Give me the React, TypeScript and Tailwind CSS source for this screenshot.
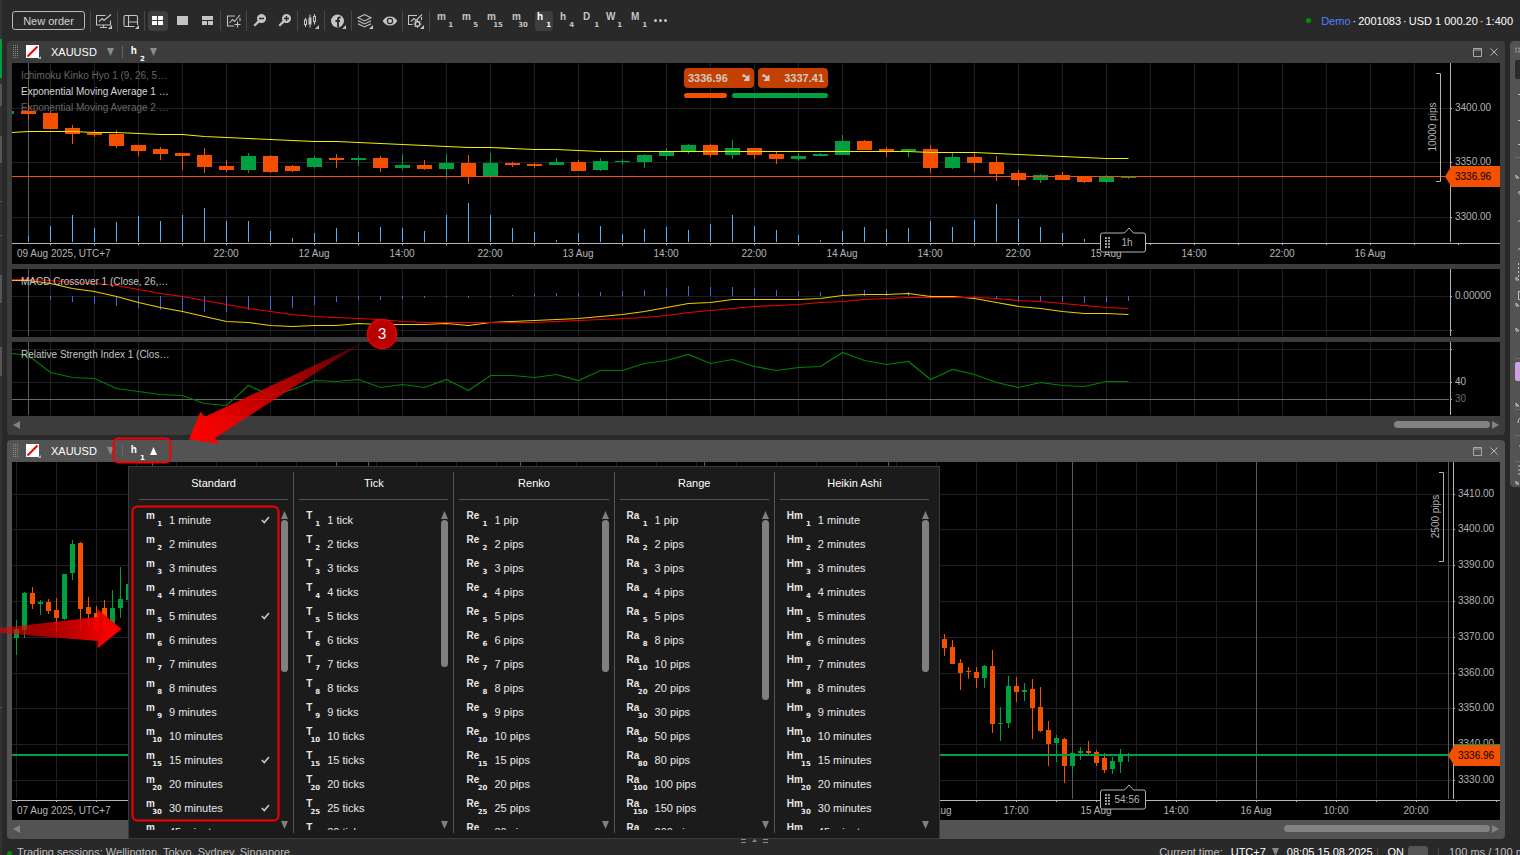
import React from 'react';

type Candle = [up: 0 | 1, top: number, bottom: number, high: number, low: number];

const UP = '#009f3f';
const DOWN = '#f55000';
const GRID = '#1e1e24';
const MARK = '#5c5c5c';
const AXIS = '#b4b4b4';

const H2_CANDLES: Candle[] = [
  [0, 111, 114, 103, 120], [0, 113, 129, 111, 129], [0, 128, 134, 125, 144], [0, 133, 135, 130, 137],
  [0, 134, 146, 130, 148], [0, 145, 151, 145, 156], [0, 149, 154, 147, 160], [0, 153, 156, 153, 170],
  [0, 155, 167, 148, 173], [0, 166, 170, 160, 172], [1, 156, 170, 153, 173], [0, 156, 172, 155, 173],
  [0, 166, 171, 165, 172], [1, 158, 167, 156, 168], [0, 158, 160, 154, 168], [1, 158, 160, 156, 166],
  [0, 158, 168, 156, 172], [1, 165, 168, 154, 170], [0, 165, 169, 160, 170], [1, 163, 169, 154, 179],
  [0, 163, 177, 155, 184], [1, 163, 176, 153, 178], [0, 163, 165, 162, 167], [0, 164, 166, 163, 168],
  [1, 162, 165, 158, 165], [0, 162, 171, 160, 171], [1, 161, 170, 158, 171], [1, 161, 162, 159, 165],
  [1, 155, 162, 154, 168], [1, 151, 156, 148, 160], [1, 145, 151, 144, 154], [0, 145, 155, 144, 157],
  [1, 148, 155, 140, 159], [0, 148, 155, 148, 159], [0, 154, 159, 151, 164], [1, 156, 159, 153, 161],
  [1, 154, 156, 153, 156], [1, 141, 155, 135, 155], [0, 141, 150, 140, 150], [0, 149, 151, 147, 157],
  [1, 149, 151, 149, 157], [0, 149, 168, 145, 173], [1, 157, 168, 152, 169], [0, 157, 163, 152, 172],
  [0, 162, 174, 156, 181], [0, 173, 180, 170, 186], [1, 175, 180, 174, 183], [0, 175, 180, 172, 180],
  [0, 176, 182, 176, 183], [1, 176, 182, 175, 183], [1, 177, 178, 177, 179],
];

const VOLUMES = [
  236, 226, 215, 228, 222, 216, 221, 215, 208, 221, 221, 231, 238, 233, 228, 232, 227, 228, 231, 215, 203, 215, 228, 232, 240,
  233, 226, 234, 229, 227, 230, 224, 215, 226, 230, 235, 240, 231, 227, 229, 228, 221, 227, 220, 204, 219, 227, 233, 239,
];

const EMA = [
  131, 131, 131, 132, 132, 133, 134, 134, 136, 137, 138, 139, 140, 141, 141, 142, 143, 144, 145, 146, 147, 147, 148, 149, 149,
  150, 151, 151, 151, 151, 151, 151, 151, 151, 151, 151, 151, 151, 151, 151, 151, 152, 152, 152, 153, 154, 155, 156, 157, 158, 158,
];

const MACD_BARS = [
  297, 300, 302, 304, 306, 308, 310, 311, 312, 312, 310, 310, 308, 305, 302, 300, 300, 299, 298, 297, 298, 297, 295, 294, 293,
  293, 292, 291, 290, 288, 286, 287, 287, 288, 290, 291, 292, 290, 290, 291, 292, 295, 297, 297, 299, 302, 302, 302, 303, 302, 301,
];

const MACD_SIGNAL = [
  279, 280, 282, 283, 285, 289, 293, 296, 300, 304, 308, 311, 314, 316, 317, 318, 319, 321, 322, 322, 322, 322, 322, 322, 321,
  320, 319, 318, 317, 315, 312, 310, 308, 306, 305, 304, 302, 301, 299, 298, 297, 297, 297, 297, 298, 300, 301, 303, 305, 307, 308,
];

const MACD_LINE = [
  280, 283, 288, 291, 296, 302, 307, 311, 316, 321, 322, 325, 326, 325, 325, 323, 324, 324, 324, 323, 325, 322, 321, 320, 319,
  318, 316, 314, 311, 307, 303, 302, 299, 299, 299, 299, 298, 295, 294, 294, 293, 296, 296, 298, 302, 306, 308, 311, 313, 313, 314,
];

const RSI = [
  355, 372, 377, 378, 388, 391, 394, 395, 403, 405, 385, 395, 389, 380, 381, 379, 387, 384, 387, 379, 390, 375, 375, 377, 374,
  380, 370, 370, 363, 360, 354, 363, 359, 366, 370, 367, 366, 352, 360, 364, 361, 379, 369, 374, 382, 387, 382, 385, 386, 381, 381,
];

const H1_LEFT: Candle[] = [
  [1, 629, 638, 620, 655], [1, 593, 630, 592, 638], [0, 593, 604, 587, 609], [1, 602, 604, 600, 615],
  [0, 602, 611, 599, 614], [0, 610, 618, 598, 632], [1, 574, 619, 574, 620], [1, 544, 573, 540, 580],
  [0, 543, 609, 542, 630], [0, 607, 614, 597, 626], [0, 613, 630, 606, 632], [0, 608, 628, 600, 632],
  [1, 608, 628, 590, 632], [1, 599, 608, 567, 618], [1, 584, 600, 552, 602], [1, 574, 586, 560, 590],
];

const H1_RIGHT: Candle[] = [
  [0, 639, 648, 634, 656], [0, 647, 664, 640, 664], [0, 663, 673, 659, 690], [0, 671, 672, 667, 679],
  [0, 672, 678, 667, 688], [1, 666, 678, 665, 688], [0, 666, 724, 650, 733], [1, 723, 724, 707, 741],
  [1, 686, 723, 676, 728], [0, 686, 692, 677, 702], [1, 690, 692, 683, 701], [0, 689, 708, 679, 739],
  [0, 707, 731, 687, 732], [0, 730, 744, 721, 766], [1, 738, 743, 735, 762], [0, 739, 766, 738, 783],
  [1, 753, 766, 752, 775], [1, 751, 753, 747, 760], [0, 751, 753, 741, 754], [0, 752, 763, 750, 766],
  [0, 758, 770, 753, 773], [1, 761, 769, 757, 774], [1, 754, 762, 749, 773], [1, 755, 756, 753, 762],
];

const MINUTES = [1, 2, 3, 4, 5, 6, 7, 8, 9, 10, 15, 20, 30, 45];
const TICKS = [1, 2, 3, 4, 5, 6, 7, 8, 9, 10, 15, 20, 25, 30];
const RANGES = [1, 2, 3, 4, 5, 8, 10, 20, 30, 50, 80, 100, 150, 200];

const PERIOD_GROUPS = [
  { title: 'Standard', code: 'm', unit: 'minute', values: MINUTES, checked: [1, 5, 15, 30], glyph: 'w-4', thumb: 'h-[152px]' },
  { title: 'Tick', code: 'T', unit: 'tick', values: TICKS, checked: [], glyph: 'w-[14px]', thumb: 'h-[147px]' },
  { title: 'Renko', code: 'Re', unit: 'pip', values: TICKS, checked: [], glyph: 'w-[21px]', thumb: 'h-[152px]' },
  { title: 'Range', code: 'Ra', unit: 'pip', values: RANGES, checked: [], glyph: 'w-[21px]', thumb: 'h-[180px]' },
  { title: 'Heikin Ashi', code: 'Hm', unit: 'minute', values: MINUTES, checked: [], glyph: 'w-[24px]', thumb: 'h-[152px]' },
];

const Triangle: React.FC<{ dir: 'up' | 'down' | 'left' | 'right'; className?: string }> = ({ dir, className = '' }) => {
  const d = { up: 'M4 0L8 8H0z', down: 'M0 0H8L4 8z', left: 'M0 4L8 0V8z', right: 'M8 4L0 0V8z' }[dir];
  return (
    <svg width="7" height="8" viewBox="0 0 8 8" preserveAspectRatio="none" fill="currentColor" className={`shrink-0 ${className}`}>
      <path d={d} />
    </svg>
  );
};

const PeriodGlyph: React.FC<{ code: string; n: number; className?: string }> = ({ code, n, className = '' }) => (
  <span className={`flex h-4 flex-col text-[10px] leading-[8px] font-bold ${className}`}>
    <span className="self-start">{code}</span>
    <span className="self-end font-['DejaVu_Sans',sans-serif] text-[7px]">{n}</span>
  </span>
);

/* ---------- toolbar ---------- */

const Corner = () => <path d="M16 12v4h-4z" fill="currentColor" stroke="none" />;

const Icon: React.FC<{ children: React.ReactNode }> = ({ children }) => (
  <svg width="16" height="16" viewBox="0 0 16 16" fill="none" stroke="currentColor" strokeWidth="1.1">
    {children}
  </svg>
);

const Sep = () => <span className="h-5 w-px shrink-0 bg-[#484848]" />;

interface ToolProps {
  label: string;
  active?: boolean;
  wide?: boolean;
  children: React.ReactNode;
}

const Tool: React.FC<ToolProps> = ({ label, active, wide, children }) => (
  <button aria-label={label} className={`flex shrink-0 items-center justify-center ${wide ? 'w-[26px]' : 'w-[25px]'}`}>
    <span className={`flex h-[20px] w-[20px] items-center justify-center rounded ${active ? 'bg-[#3e3e3e] text-white' : ''}`}>
      {children}
    </span>
  </button>
);

const PERIOD_BUTTONS = [
  { code: 'm', n: 1, width: 'w-[25px]' },
  { code: 'm', n: 5, width: 'w-[25px]' },
  { code: 'm', n: 15, width: 'w-[25px]' },
  { code: 'm', n: 30, width: 'w-[25px]' },
  { code: 'h', n: 1, width: 'w-[23px]', active: true },
  { code: 'h', n: 4, width: 'w-[23px]' },
  { code: 'D', n: 1, width: 'w-[23px]' },
  { code: 'W', n: 1, width: 'w-[25px]' },
  { code: 'M', n: 1, width: 'w-[25px]' },
];

const Toolbar = () => (
  <header className="flex h-[41px] shrink-0 items-center pr-[7px] pl-3 text-[#c4c4c4]">
    <button className="mr-[5px] h-[19px] w-[73px] rounded-[3px] border border-[#b8b8b8] leading-4 text-[#d4d4d4]">New order</button>
    <Sep />
    <Tool label="Chart window" wide>
      <Icon>
        <path d="M9.500 2.500H.5v9.500H14.500V7.500M7.500 12v2.500M4 14.500h7M3 8.500l3-3 2 2 7-6" />
        <Corner />
      </Icon>
    </Tool>
    <Sep />
    <Tool label="Panels" wide>
      <Icon>
        <path d="M11.500 13.500H2.500q-1.500 0-1.500-1.500V4q0-1.500 1.500-1.500h10.500q1.500 0 1.500 1.500v8M5.500 2.500v11M5.500 9h9" />
        <Corner />
      </Icon>
    </Tool>
    <Sep />
    <Tool label="Multi chart" active>
      <svg width="11" height="9" fill="currentColor"><path d="M0 0h5v4H0zM6 0h5v4H6zM0 5h5v4H0zM6 5h5v4H6z" /></svg>
    </Tool>
    <Tool label="Single chart">
      <svg width="11" height="9" fill="currentColor"><path d="M0 0h11v9H0z" /></svg>
    </Tool>
    <Tool label="Free chart">
      <svg width="11" height="9" fill="currentColor"><path d="M0 0h11v4H0zM0 5h5v4H0zM6 5h5v4H6z" /></svg>
    </Tool>
    <Sep />
    <Tool label="New chart">
      <Icon>
        <path d="M9 3H1.500v10H8M3.500 10l3-3.500 2 2L14 2M11.500 8.500v6M8.500 11.500h6M14 5V8" />
      </Icon>
    </Tool>
    <Sep />
    <Tool label="Zoom out">
      <svg width="13" height="13" fill="currentColor"><path fillRule="evenodd" d="M8.500 0a4.500 4.500 0 1 1-2.200 8.400L2 12.600.5 11 4.600 6.700A4.500 4.500 0 0 1 8.500 0zM6 3.800v1.400h5V3.800z" /></svg>
    </Tool>
    <Tool label="Zoom in">
      <svg width="13" height="13" fill="currentColor"><path fillRule="evenodd" d="M8.500 0a4.500 4.500 0 1 1-2.200 8.400L2 12.600.5 11 4.600 6.700A4.500 4.500 0 0 1 8.500 0zM7.800 2v1.800H6v1.400h1.800V7h1.400V5.200H11V3.800H9.200V2z" /></svg>
    </Tool>
    <Sep />
    <Tool label="Chart type" wide>
      <Icon>
        <path d="M2.500 5v2M1.500 7h2v4.500h-2zM2.500 11.500v2.500M11.500 1v2.500M10.500 3.500h2v5h-2zM11.500 8.500v3" />
        <path d="M6.500 1.500h1v13h-1zM5.500 4.500h3v7h-3z" fill="currentColor" stroke="none" />
        <Corner />
      </Icon>
    </Tool>
    <Sep />
    <Tool label="Indicators" wide>
      <Icon>
        <circle cx="7.500" cy="8" r="6.500" fill="currentColor" stroke="none" />
        <path d="M10.500 4.500H9.500Q8 4.500 8 6v8M5.500 8h4.500" stroke="#292929" strokeWidth="1.800" />
        <Corner />
      </Icon>
    </Tool>
    <Sep />
    <Tool label="Objects">
      <Icon>
        <path d="M7.500 1.500l6.500 3.200-6.500 3.200L1 4.700z" />
        <path d="M1 7.700l6.500 3.200L14 7.700M1 10.700l6.500 3.300L14 10.700" />
        <Corner />
      </Icon>
    </Tool>
    <Tool label="View options">
      <Icon>
        <path fillRule="evenodd" d="M8 3.500c3.300 0 6 2 7.300 4.500-1.300 2.500-4 4.500-7.300 4.500S2 10.500.7 8C2 5.500 4.700 3.500 8 3.500zm0 1.300a3.200 3.200 0 1 0 0 6.400 3.200 3.200 0 0 0 0-6.400z" fill="currentColor" stroke="none" />
        <circle cx="8" cy="8" r="2" fill="currentColor" stroke="none" />
      </Icon>
    </Tool>
    <Sep />
    <Tool label="Chart settings" wide>
      <Icon>
        <path d="M9 2.500H.5v9h4M3 8.500l3-3 2 2 6-6M13.500 4v3" />
        <circle cx="9.500" cy="11" r="2.300" strokeWidth="1.400" />
        <path d="M9.500 7v1.500M9.500 13.500V15M5.500 11h1.500M12 11h1.500M6.700 8.200l1 1M12.300 8.200l-1 1M6.700 13.800l1-1" />
        <Corner />
      </Icon>
    </Tool>
    <Sep />
    <div className="ml-[5px] flex items-center">
      {PERIOD_BUTTONS.map((p) => (
        <button key={p.code + p.n} className={`${p.width} flex h-5 items-center`}>
          <span className={`flex h-5 items-center rounded px-0.5 ${p.active ? 'bg-[#3e3e3e] text-white' : ''}`}>
            <PeriodGlyph code={p.code} n={p.n} className={p.code === 'h' ? 'w-[14px]' : 'w-4'} />
          </span>
        </button>
      ))}
    </div>
    <button aria-label="More periods" className="flex gap-0.5">
      <i className="h-[3px] w-[3px] rounded-full bg-current" />
      <i className="h-[3px] w-[3px] rounded-full bg-current" />
      <i className="h-[3px] w-[3px] rounded-full bg-current" />
    </button>
    <div className="ml-auto flex items-center gap-0.5 whitespace-nowrap text-white">
      <i className="mr-2 h-[5px] w-[5px] rounded-full bg-[#009000]" />
      <a href="#account" className="text-[#5080ff]">Demo</a>
      <span>·</span>
      <span>2001083</span>
      <span>·</span>
      <span>USD 1 000.20</span>
      <span>·</span>
      <span>1:400</span>
    </div>
  </header>
);

/* ---------- chart parts ---------- */

const Candles: React.FC<{ data: Candle[]; x0: number; step: number; body: number }> = ({ data, x0, step, body }) => (
  <g shapeRendering="crispEdges">
    {data.map(([up, top, bottom, high, low], i) => {
      const x = x0 + i * step;
      return (
        <g key={x} fill={up ? UP : DOWN}>
          <rect x={x} y={high} width="1" height={low - high} />
          <rect x={x - (body - 1) / 2} y={top} width={body} height={bottom - top} />
        </g>
      );
    })}
  </g>
);

const Line: React.FC<{ values: number[]; start: number; color: string }> = ({ values, start, color }) => (
  <polyline
    fill="none"
    stroke={color}
    strokeWidth="1.2"
    points={`12,${start + 0.5} ` + values.map((y, i) => `${28.5 + i * 22},${y + 0.5}`).join(' ')}
  />
);

interface PlotProps {
  top: number;
  height: number;
  floor?: number;
  axisX: number;
  columns: [first: number, step: number];
  rows: number[];
  marks: number[];
  prices: [y: number, label: string, dim?: boolean][];
  children: React.ReactNode;
  overlay?: React.ReactNode;
}

// Time runs from the left edge; the price scale hangs on the right edge.
const Plot: React.FC<PlotProps> = ({ top, height, floor, axisX, columns, rows, marks, prices, children, overlay }) => {
  const end = floor ?? top + height - 1;
  const xs = Array.from({ length: 70 }, (_, i) => columns[0] + i * columns[1]);
  return (
    <svg width="100%" height={height} className="block bg-black" fontSize="10" fill="#b4b4b4">
      <g shapeRendering="crispEdges">
        {rows.map((y) => (
          <rect key={y} y={y - top} width="100%" height="1" fill={GRID} />
        ))}
        <g transform={`translate(-12 ${-top})`}>
          {xs.map((x) => (
            <rect key={x} x={x} y={top} width="1" height={end - top} fill={GRID} />
          ))}
          {marks.map((x) => (
            <rect key={x} x={x} y={top} width="1" height={end - top} fill={MARK} />
          ))}
        </g>
      </g>
      <g transform={`translate(-12 ${-top})`}>{children}</g>
      <svg x="100%" overflow="visible">
        <g transform={`translate(-1500 ${-top})`}>
          <rect x={axisX} y={top} width="60" height={end - top} fill="black" />
          <rect x={axisX} y={top} width="1" height={end - top} fill={AXIS} />
          {prices.map(([y, label, dim]) => (
            <g key={y}>
              <rect x={axisX + 1} y={y} width="1" height="1" fill={AXIS} />
              <text x={axisX + 5} y={y + 3} fill={dim ? '#6a6a6a' : undefined}>{label}</text>
            </g>
          ))}
        </g>
      </svg>
      {floor && (
        <g shapeRendering="crispEdges">
          <rect y={floor + 1 - top} width="100%" height="1" fill={AXIS} />
          <g transform={`translate(-12 ${-top})`}>
            {xs.map((x) => (
              <rect key={x} x={x} y={floor + 2} width="1" height="1" fill={AXIS} />
            ))}
          </g>
        </g>
      )}
      {overlay}
    </svg>
  );
};

const TimeTag: React.FC<{ y: number; label: string }> = ({ y, label }) => (
  <g>
    <path
      d={`M1103.500 ${y + 5}H1124.500L1129 ${y}L1133.500 ${y + 5}H1143.500q2 0 2 2V${y + 22}q0 2-2 2H1102.500q-2 0-2-2V${y + 7}q0-2 2-2z`}
      fill="black"
      stroke={AXIS}
    />
    <g shapeRendering="crispEdges" fill="#9a9a9a">
      {[0, 1, 2, 3].map((i) => (
        <g key={i}>
          <rect x="1105" y={y + 9 + i * 3} width="2" height="2" />
          <rect x="1108" y={y + 9 + i * 3} width="2" height="2" />
        </g>
      ))}
    </g>
    <text x="1127" y={y + 18} textAnchor="middle">{label}</text>
  </g>
);

const PipsScale: React.FC<{ x: number; top: number; bottom: number; label: string }> = ({ x, top, bottom, label }) => (
  <g>
    <path d={`M${x - 4} ${top + 0.5}H${x + 0.5}V${bottom + 0.5}H${x - 4}`} fill="none" stroke={AXIS} />
    <text transform={`translate(${x - 4} ${(top + bottom) / 2}) rotate(-90)`} textAnchor="middle">{label}</text>
  </g>
);

const PriceTag: React.FC<{ x: number; y: number }> = ({ x, y }) => (
  <g>
    <path d={`M${x} ${y}l6.500-10.500H1500V${y + 10.500}H${x + 6.5}z`} fill={DOWN} />
    <text x={x + 10} y={y + 3} fill="black">3336.96</text>
  </g>
);

const TimeLabels: React.FC<{ y: number; origin: string; items: [number, string][] }> = ({ y, origin, items }) => (
  <g>
    <text x="17" y={y}>{origin}</text>
    {items.map(([x, label]) => (
      <text key={x} x={x} y={y} textAnchor="middle">{label}</text>
    ))}
  </g>
);

const ChartHeader: React.FC<{ period: number; open?: boolean }> = ({ period, open }) => (
  <div className="flex h-[22px] items-center pr-[7px] pl-1.5">
    <svg width="5" height="14" fill="#8a8a8a">
      {[0, 2, 4, 6, 8, 10, 12].map((y) => (
        <path key={y} d={`M0 ${y}h1v1h-1zM2 ${y}h1v1h-1zM4 ${y}h1v1h-1z`} />
      ))}
    </svg>
    <button aria-label="Link group" className="ml-2">
      <svg width="15" height="14">
        <path d="M0 0h13v13H0z" fill="white" />
        <path d="M1.500 11.500l10-10" stroke="#f00000" strokeWidth="2" />
        <path d="M15 11v3h-3z" fill="#b4b4b4" />
      </svg>
    </button>
    <button className="ml-2.5 flex items-center gap-2.5 text-white">
      XAUUSD
      <Triangle dir="down" className="text-[#8a8a8a]" />
    </button>
    <span className="mx-2 h-3 w-px bg-[#666]" />
    <button aria-label="Period" aria-expanded={open} className="flex items-center gap-[5px] text-white">
      <PeriodGlyph code="h" n={period} className="mt-1.5 w-[14px]" />
      <Triangle dir={open ? 'up' : 'down'} className={open ? 'text-white' : 'text-[#8a8a8a]'} />
    </button>
    <div className="ml-auto flex items-center gap-2">
      <button aria-label="Maximize">
        <svg width="9" height="9" fill="none" stroke="#a8a8a8"><path d="M.5.5h8v8h-8zM0 2h9" /></svg>
      </button>
      <button aria-label="Close">
        <svg width="8" height="8" stroke="#b8b8b8"><path d="M.5.5l7 7M7.500.5l-7 7" /></svg>
      </button>
    </div>
  </div>
);

const ScrollBar: React.FC<{ thumb: string }> = ({ thumb }) => (
  <div className="flex h-[19px] items-center gap-0.5 px-px pb-0.5 text-[#828282]">
    <Triangle dir="left" />
    <span className={`ml-auto h-[7px] rounded-full bg-current ${thumb}`} />
    <Triangle dir="right" />
  </div>
);

const UpperChart = () => (
  <section className="rounded bg-[#3c3c3c] px-[5px]">
    <div className="-mx-[5px]"><ChartHeader period={2} /></div>
    <div className="flex flex-col gap-[5px]">
      <Plot
        top={63}
        height={201}
        floor={242}
        axisX={1450}
        columns={[50, 44]}
        rows={[108, 162, 217]}
        marks={[28]}
        prices={[[108, '3400.00'], [162, '3350.00'], [217, '3300.00']]}
        overlay={
          <>
            <rect y="113" width="100%" height="1" fill={DOWN} />
            <svg x="100%" overflow="visible">
              <g transform="translate(-1500 -63)">
                <PipsScale x={1440} top={73} bottom={181} label="10000 pips" />
                <PriceTag x={1445} y={176.5} />
              </g>
            </svg>
            <g transform="translate(-12 -63)"><TimeTag y={228} label="1h" /></g>
          </>
        }
      >
        <text x="21" y="79" fill="#666">Ichimoku Kinko Hyo 1 (9, 26, 5…</text>
        <text x="21" y="95" fill="#d8d8d8">Exponential Moving Average 1 …</text>
        <rect x="12" y="111" width="2" height="3" fill={UP} />
        <Candles data={H2_CANDLES} x0={28} step={22} body={15} />
        <text x="21" y="111" fill="#666">Exponential Moving Average 2 …</text>
        <g shapeRendering="crispEdges" fill="#4db4ff">
          {VOLUMES.map((y, i) => (
            <rect key={i} x={28 + i * 22} y={y} width="1" height={242 - y} />
          ))}
        </g>
        <Line values={EMA} start={132} color="#f0f000" />
        <TimeLabels
          y={257}
          origin="09 Aug 2025, UTC+7"
          items={[
            [226, '22:00'], [314, '12 Aug'], [402, '14:00'], [490, '22:00'], [578, '13 Aug'], [666, '14:00'], [754, '22:00'],
            [842, '14 Aug'], [930, '14:00'], [1018, '22:00'], [1106, '15 Aug'], [1194, '14:00'], [1282, '22:00'], [1370, '16 Aug'],
          ]}
        />
      </Plot>
      <Plot top={269} height={68} axisX={1450} columns={[50, 44]} rows={[296, 330]} marks={[28]} prices={[[296, '0.00000'], [330, '']]}>
        <g shapeRendering="crispEdges" fill="#4169e1">
          {MACD_BARS.map((y, i) => (
            <rect key={i} x={28 + i * 22} y={Math.min(y, 296)} width="1" height={Math.abs(y - 296)} />
          ))}
        </g>
        <Line values={MACD_LINE} start={280} color="#f0cc00" />
        <Line values={MACD_SIGNAL} start={279} color="#f00000" />
        <text x="21" y="285" fill="#c4c4c4">MACD Crossover 1 (Close, 26,…</text>
      </Plot>
      <Plot top={342} height={74} axisX={1450} columns={[50, 44]} rows={[349, 382]} marks={[28]} prices={[[349, ''], [382, '40'], [399, '30', true]]}>
        <rect x="12" y="399" width="1437" height="1" fill="#6a6a6a" />
        <Line values={RSI} start={353} color="#008000" />
        <text x="21" y="358" fill="#c4c4c4">Relative Strength Index 1 (Clos…</text>
      </Plot>
    </div>
    <ScrollBar thumb="w-24" />
  </section>
);

const QuoteArrow = () => (
  <svg width="8" height="8" fill="currentColor"><path d="M1 0L0 2l1 1h2l1 1-2 2v1h5.500V1H6.500L5 2.500 2.500.5z" /></svg>
);

const QuotePanel = () => (
  <div className="absolute top-[27px] left-[677px] grid grid-cols-2 gap-x-1 text-[11px] leading-5 font-bold text-[#d0c8c4]">
    <button className="flex h-5 w-[70px] items-center justify-between rounded bg-[#c44000] px-1">
      3336.96
      <QuoteArrow />
    </button>
    <button className="flex h-5 w-[70px] items-center justify-between rounded bg-[#c44000] px-1">
      <QuoteArrow />
      3337.41
    </button>
    <div className="col-span-2 mt-[5px] flex gap-[5px]">
      <i className="h-[5px] w-[43px] rounded-full bg-[#f55000]" />
      <i className="h-[5px] flex-1 rounded-full bg-[#009f3f]" />
    </div>
  </div>
);

const PeriodMenu = () => (
  <div className="absolute top-[26px] left-[121px] flex h-[373px] w-[812px] border border-[#3a3a3a] bg-[#1b1b1b] py-[5px] pr-1 pl-[5px] text-[#e8e8e8]">
    {PERIOD_GROUPS.map((g, gi) => (
      <div key={g.title} className={`flex min-w-0 flex-1 flex-col border-r px-[5px] ${gi < 4 ? 'border-[#555]' : 'border-transparent'}`}>
        <h3 className="flex h-7 shrink-0 items-center justify-center border-b border-[#555] pb-[5px] text-white">{g.title}</h3>
        <div className="mt-2 flex min-h-0 flex-1">
          <ul className="h-[322px] flex-1 overflow-hidden pl-[7px]">
            {g.values.map((n) => (
              <li key={n}>
                <button className="flex h-6 w-full items-center gap-[7px] text-left">
                  <PeriodGlyph code={g.code} n={n} className={g.glyph} />
                  <span className="flex-1">{`${n} ${g.unit}${n > 1 ? 's' : ''}`}</span>
                  {g.checked.includes(n) && (
                    <svg width="9" height="8" fill="none" stroke="#c8c8c8" strokeWidth="1.600" className="mr-[11px]">
                      <path d="M.8 4l2.500 2.500L8 1" />
                    </svg>
                  )}
                </button>
              </li>
            ))}
          </ul>
          <div className="flex w-[7px] flex-col gap-px pt-[3px] pb-1 text-[#808080]">
            <Triangle dir="up" />
            <span className={`w-[7px] rounded-full bg-current ${g.thumb}`} />
            <Triangle dir="down" className="mt-auto" />
          </div>
        </div>
      </div>
    ))}
  </div>
);

const LowerChart = () => (
  <section className="relative rounded bg-[#535353] px-[5px]">
    <div className="-mx-[5px]"><ChartHeader period={1} open /></div>
    <Plot
      top={462}
      height={358}
      floor={799}
      axisX={1453}
      columns={[16, 40]}
      rows={[494, 529, 565, 601, 637, 673, 708, 744, 780]}
      marks={[152, 336, 368, 520, 704, 888, 1072, 1256, 1448]}
      prices={[
        [494, '3410.00'], [529, '3400.00'], [565, '3390.00'], [601, '3380.00'], [637, '3370.00'],
        [673, '3360.00'], [708, '3350.00'], [744, '3340.00'], [780, '3330.00'],
      ]}
      overlay={
        <>
          <rect y="292" width="100%" height="2" fill={UP} />
          <svg x="100%" overflow="visible">
            <g transform="translate(-1500 -462)">
              <PipsScale x={1443} top={472} bottom={561} label="2500 pips" />
              <path d="M1454 744.500h46" stroke={UP} />
              <PriceTag x={1448} y={755.5} />
            </g>
          </svg>
          <g transform="translate(-12 -462)"><TimeTag y={785} label="54:56" /></g>
        </>
      }
    >
      <Candles data={H1_LEFT} x0={16} step={8} body={5} />
      <Candles data={H1_RIGHT} x0={944} step={8} body={5} />
      <TimeLabels
        y={814}
        origin="07 Aug 2025, UTC+7"
        items={[[936, '14 Aug'], [1016, '17:00'], [1096, '15 Aug'], [1176, '14:00'], [1256, '16 Aug'], [1336, '10:00'], [1416, '20:00']]}
      />
    </Plot>
    <ScrollBar thumb="w-[206px]" />
    <PeriodMenu />
  </section>
);

/* ---------- side strips, status, callouts ---------- */

const LeftStrip = () => (
  <aside className="absolute top-0 left-0 h-full w-0.5 bg-[#333]">
    <svg width="2" height="720">
      <path d="M0 39h2v39H0z" fill={UP} />
      <path d="M0 84h2v22H0zM0 136h2v27H0zM0 275h2v28H0zM0 347h2v29H0z" fill="#555" />
      <path d="M0 201h2v1H0zM0 235h2v1H0zM0 707h2v1H0z" fill="#555" />
    </svg>
  </aside>
);

const RightStrip = () => (
  <aside className="h-[446px] w-2.5 shrink-0 rounded-l bg-[#535353]">
    <svg width="10" height="446" stroke="#c4c4c4" fill="none">
      <path d="M5 7.500h2M8 7.500h2M5 10.500h2M8 10.500h2" strokeWidth="2" stroke="#8a8a8a" />
      <rect x="5" y="19" width="10" height="19" rx="2" fill="#2a2a2a" stroke="none" />
      <path d="M8 53.500h2M8 79.500h2M8 103.500h2" />
      <path d="M5 116.500h5M5 317.500h5M5 368.500h5M5 394.500h5M5 420.500h5" stroke="#6c6c6c" />
      <path d="M6 134v3h3zM8 152q2-4 2 2M8 181l2-2M8 209l2-2M6 236v3h3zM6 262v3h3zM6 287v3h3zM6 362v3h3zM6 440v3h3z" />
      <path d="M10 250.500H8.500v8H10M10 377q-2 1-2 5M9 405h1" />
      <path d="M8.500 222v14M9 424v10" strokeDasharray="2 2" />
      <rect x="5" y="321" width="10" height="19" rx="2" fill="#cf9fe0" stroke="none" />
    </svg>
  </aside>
);

const StatusBar = () => (
  <footer className="flex h-4 shrink-0 items-start pl-[7px] leading-4 whitespace-nowrap text-[#c0c0c0]">
    <i className="mt-[7px] mr-[5px] h-[5px] w-[5px] rounded-full bg-[#009000]" />
    <span>Trading sessions: Wellington, Tokyo, Sydney, Singapore</span>
    <span className="ml-auto">Current time:</span>
    <button className="ml-2 flex items-center gap-1.5 text-white">
      UTC+7
      <Triangle dir="down" className="text-[#8a8a8a]" />
    </button>
    <span className="ml-2 text-white">08:05 15.08.2025</span>
    <span className="mx-1 mt-1 h-4 w-px bg-[#484848]" />
    <label htmlFor="one-click" className="ml-1.5 text-white">ON</label>
    <input id="one-click" type="checkbox" className="mt-0.5 ml-1 h-4 w-5 appearance-none rounded-[3px] bg-[#555]" />
    <span className="mx-2.5 mt-1 h-4 w-px bg-[#484848]" />
    <span className="w-[71px] overflow-hidden">100 ms / 100 ms</span>
  </footer>
);

const Callouts = () => (
  <svg className="pointer-events-none absolute top-0 left-0" width="420" height="840">
    <defs>
      <linearGradient id="fadeDown" gradientUnits="userSpaceOnUse" x1="362" y1="343" x2="195" y2="437">
        <stop offset="0" stopColor="#f00000" stopOpacity="0.3" />
        <stop offset="0.45" stopColor="#d80000" stopOpacity="0.8" />
        <stop offset="1" stopColor="#ff0000" />
      </linearGradient>
      <linearGradient id="fadeRight" gradientUnits="userSpaceOnUse" x1="0" y1="0" x2="110" y2="0">
        <stop offset="0" stopColor="#f00000" stopOpacity="0.55" />
        <stop offset="0.6" stopColor="#d80000" stopOpacity="0.85" />
        <stop offset="1" stopColor="#f80000" />
      </linearGradient>
    </defs>
    <path d="M189 439.500L200.500 411.500L204.500 417L362 343L215 438L219 444z" fill="url(#fadeDown)" />
    <path d="M121.500 629L97.500 648.500V641L0 633V628L97.500 617V609z" fill="url(#fadeRight)" />
    <circle cx="382" cy="334" r="14.500" fill="#b80000" stroke="#ec0000" strokeWidth="1.500" />
    <text x="382" y="339" textAnchor="middle" fontSize="15" fontFamily="Lato, sans-serif" fill="white">3</text>
    <rect x="113.500" y="438.500" width="57" height="24" rx="5" fill="none" stroke="#f80000" strokeWidth="2" />
    <rect x="132.500" y="506.500" width="146" height="314" rx="5" fill="none" stroke="#f80000" strokeWidth="2" />
  </svg>
);

const App: React.FC = () => (
  <div className="relative flex h-screen flex-col overflow-hidden bg-[#292929] font-['Liberation_Sans',Arial,sans-serif] text-[11px] leading-4">
    <Toolbar />
    <main className="flex gap-[5px] pl-[7px]">
      <div className="flex min-w-0 flex-1 flex-col">
        <div className="relative mb-[5px]">
          <UpperChart />
          <QuotePanel />
        </div>
        <LowerChart />
        <div className="flex h-[5px] items-start justify-center gap-1.5 pr-1 text-[#8a8a8a]">
          <svg width="5" height="4" stroke="currentColor"><path d="M0 .5h5M0 3.500h5" /></svg>
          <svg width="5" height="4" fill="currentColor"><path d="M2.500 0L5 3H0z" /></svg>
          <svg width="5" height="4" stroke="currentColor"><path d="M0 .5h5M0 3.500h5" /></svg>
        </div>
      </div>
      <RightStrip />
    </main>
    <StatusBar />
    <LeftStrip />
    <Callouts />
  </div>
);

export default App;
